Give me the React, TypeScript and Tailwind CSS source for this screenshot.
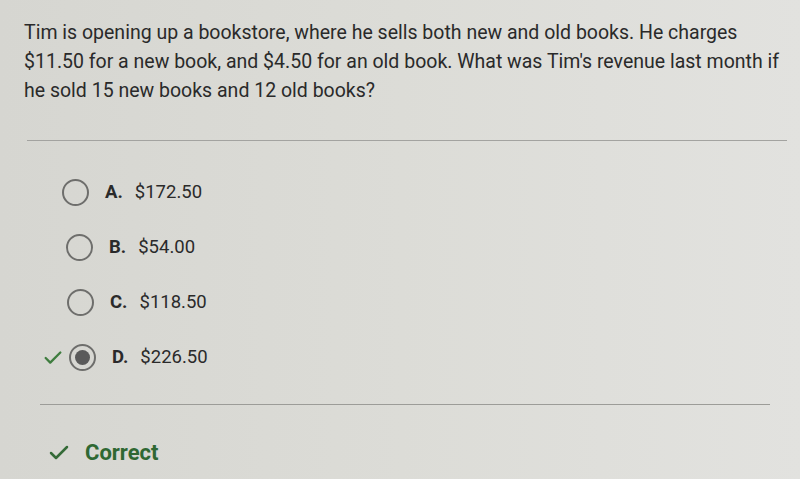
import { Check } from 'lucide-react';

const options = [
  { key: 'A', text: '$172.50', indent: 'ml-[62px]', selected: false },
  { key: 'B', text: '$54.00', indent: 'ml-[66px]', selected: false },
  { key: 'C', text: '$118.50', indent: 'ml-[67px]', selected: false },
  { key: 'D', text: '$226.50', indent: 'ml-[69px]', selected: true },
];

export default function App() {
  return (
    <div
      className="w-[800px] h-[479px] overflow-hidden bg-gradient-to-r from-[#d6d6d1] via-[#dcdcd7] to-[#e2e2df] text-[#2a2a2a]"
      style={{ fontFamily: 'Roboto, "Liberation Sans", sans-serif' }}
    >
      {/* Question */}
      <div className="pt-[18px] pl-[24px] pr-[10px] h-[140px]">
        <p className="text-[19.5px] leading-[29px]">
          Tim is opening up a bookstore, where he sells both new and old books. He charges
          <br />
          $11.50 for a new book, and $4.50 for an old book. What was Tim's revenue last month if
          <br />
          he sold 15 new books and 12 old books?
        </p>
      </div>
      <div className="ml-[27px] w-[760px] h-px bg-[#a3a3a0]" />

      {/* Options */}
      <div className="flex flex-col pt-[38px] gap-[28px] h-[263px]">
        {options.map((o) => (
          <div key={o.key} className={`relative flex items-center h-[27px] ${o.indent}`}>
            {o.selected && (
              <Check
                className="absolute left-[-27px] top-[3px] text-[#3f7d3f]"
                size={22}
                strokeWidth={2.5}
              />
            )}
            <div className="w-[27px] h-[27px] rounded-full border-2 border-[#6e6e6c] flex items-center justify-center">
              {o.selected && <div className="w-[15px] h-[15px] rounded-full bg-[#5a5a5a]" />}
            </div>
            <span className="ml-[16px] font-bold text-[18.5px]">{o.key}.</span>
            <span className="ml-[12px] text-[18.5px]">{o.text}</span>
          </div>
        ))}
      </div>
      <div className="ml-[40px] w-[730px] h-px bg-[#9c9c98]" />

      {/* Result */}
      <div className="flex items-center pl-[47px] pt-[31px]">
        <Check className="text-[#356b38]" size={24} strokeWidth={2.5} />
        <span className="ml-[14px] font-bold text-[22px] text-[#2f6833]">Correct</span>
      </div>
    </div>
  );
}
